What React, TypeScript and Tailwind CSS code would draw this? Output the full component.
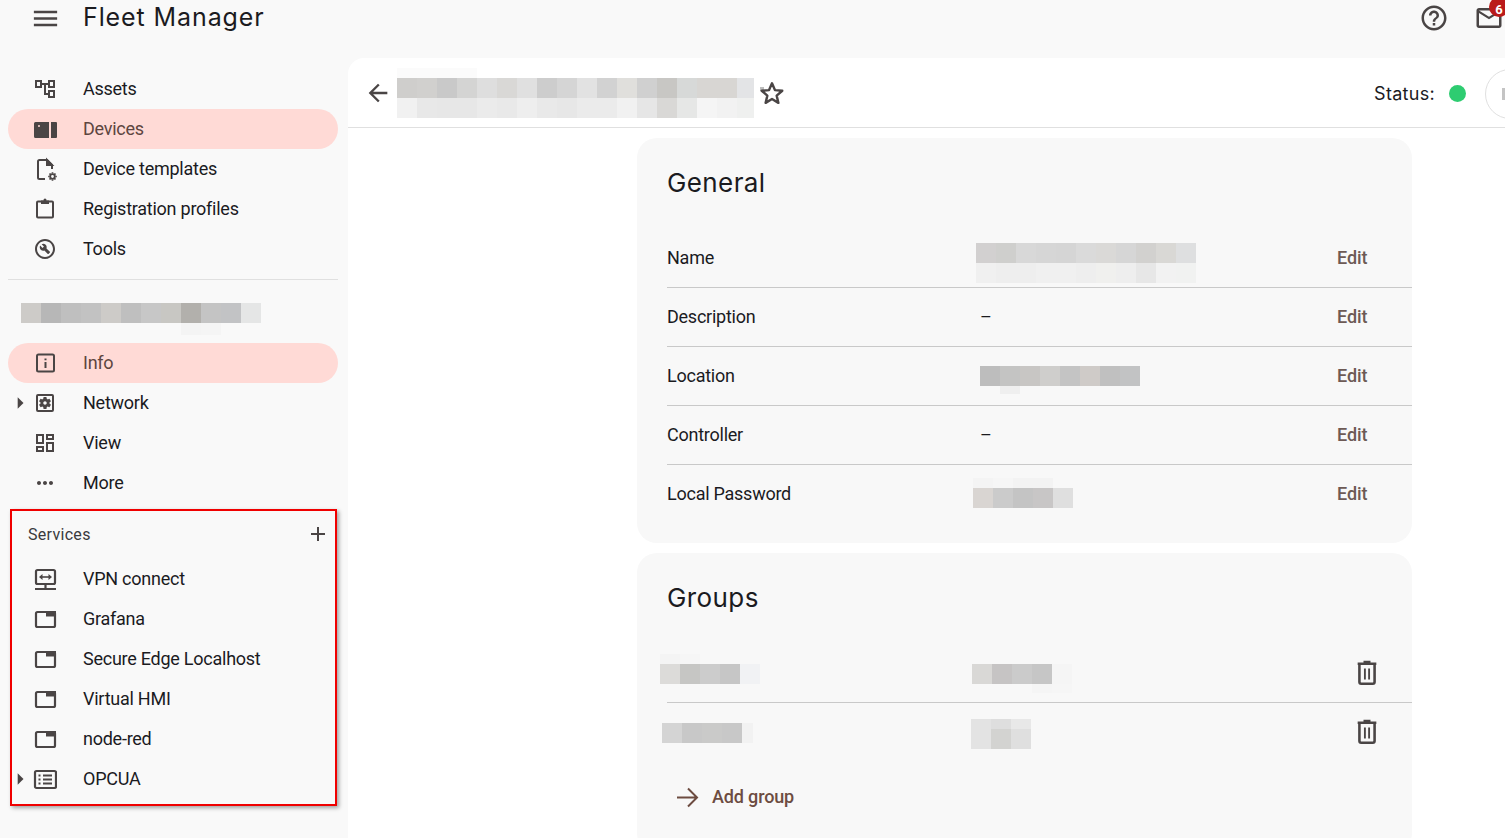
import React from 'react';
import {
  MdAdd,
  MdArrowBack,
  MdArrowRight,
  MdHelpOutline,
  MdMenu,
  MdMoreHoriz,
  MdOutlineAccountTree,
  MdOutlineBuildCircle,
  MdOutlineDashboard,
  MdOutlineMail,
  MdOutlineSettingsApplications,
} from 'react-icons/md';

const ICON = '#4a4545';
const HEADING = "font-['Inter',sans-serif]";
const NONE = 'transparent';

// pixelated (blurred out) values from the original screenshot
function Mosaic({ rows, width, className = '' }: { rows: { h: number; cells: string[] }[]; width: number; className?: string }) {
  return (
    <div className={`shrink-0 overflow-hidden ${className}`} style={{ width }}>
      {rows.map((row, i) => (
        <div key={i} className="flex" style={{ height: row.h }}>
          {row.cells.map((c, j) => (
            <div key={j} className="w-5 shrink-0" style={{ backgroundColor: c }} />
          ))}
        </div>
      ))}
    </div>
  );
}

const DevicesIcon = () => (
  <svg width="24" height="24" viewBox="0 0 24 24" fill={ICON}>
    <path d="M2.500 5H16v16H2.500A1.500 1.500 0 0 1 1 19.500v-13A1.500 1.500 0 0 1 2.500 5zM6 8a1 1 0 1 0 0 2 1 1 0 0 0 0-2z" fillRule="evenodd" />
    <path d="M18 5h5a1 1 0 0 1 1 1v14a1 1 0 0 1-1 1h-5z" />
  </svg>
);

const TemplateIcon = () => (
  <svg width="24" height="24" viewBox="0 0 24 24" fill="none" stroke={ICON} strokeWidth="2">
    <path d="M12 22H6.500A1.500 1.500 0 0 1 5 20.500v-16A1.500 1.500 0 0 1 6.500 3H14l5 5v4" />
    <path d="M14 3v5h5z" fill={ICON} />
    <circle cx="19.500" cy="19.500" r="2.300" strokeWidth="1.800" />
    <path d="M19.500 15.200v1.400M19.500 22.400v1.400M15.200 19.500h1.400M22.400 19.500h1.400M16.500 16.500l1 1M21.500 21.500l1 1M16.500 22.500l1-1M21.500 17.500l1-1" strokeWidth="1.700" />
  </svg>
);

const ClipboardIcon = () => (
  <svg width="24" height="24" viewBox="0 0 24 24" fill="none" stroke={ICON} strokeWidth="2">
    <rect x="4" y="4.500" width="16" height="16" rx="1" />
    <path d="M8 3.500h8V7H8z" fill={ICON} stroke="none" />
    <circle cx="12" cy="3" r="1.500" fill={ICON} stroke="none" />
  </svg>
);

const InfoSquareIcon = () => (
  <svg width="24" height="24" viewBox="0 0 24 24" fill="none" stroke={ICON} strokeWidth="2">
    <rect x="4" y="3.500" width="17" height="17" rx="1.500" />
    <path d="M12.500 11v6M12.500 7.500v1.800" />
  </svg>
);

const VpnIcon = () => (
  <svg width="24" height="24" viewBox="0 0 24 24" fill="none" stroke={ICON} strokeWidth="2.200">
    <rect x="3" y="3" width="19" height="14" rx="1.500" />
    <path d="M2 22h21M12.500 17v4" />
    <path d="M8 10h9" strokeWidth="1.600" />
    <path d="M9.500 7L6 10l3.500 3zM15.500 7L19 10l-3.500 3z" fill={ICON} stroke="none" />
  </svg>
);

const WindowIcon = () => (
  <svg width="24" height="24" viewBox="0 0 24 24" fill="none" stroke={ICON} strokeWidth="2.200">
    <rect x="3" y="5" width="19" height="15" rx="1.500" />
    <path d="M13 4h10v5.500H13z" fill={ICON} stroke="none" />
  </svg>
);

const ListIcon = () => (
  <svg width="24" height="24" viewBox="0 0 24 24" fill="none" stroke={ICON} strokeWidth="2.200">
    <rect x="2" y="4" width="21" height="17" rx="1.500" />
    <path d="M10 8.500h9M10 12.500h9M10 16.500h9" strokeWidth="1.800" />
    <path d="M5.500 8.500h2M5.500 12.500h2M5.500 16.500h2" strokeWidth="1.800" />
  </svg>
);

const TrashIcon = () => (
  <svg width="28" height="28" viewBox="0 0 24 24" fill="none" stroke={ICON} strokeWidth="2.200">
    <path d="M5.500 6v14.500a1.500 1.500 0 0 0 1.500 1.500h10a1.500 1.500 0 0 0 1.500-1.500V6" />
    <path d="M4 5h16M9 3.500h6" />
    <path d="M10.200 9v9.500M13.800 9v9.500" strokeWidth="1.600" />
  </svg>
);

const StarIcon = () => (
  <svg className="relative" width="26" height="26" viewBox="0 0 24 24" fill="none" stroke={ICON} strokeWidth="2.200" strokeLinejoin="round">
    <path d="M12 3l2.700 6.300 6.800.6-5.200 4.500 1.600 6.700-5.900-3.600-5.900 3.600 1.600-6.700-5.200-4.500 6.800-.6z" />
  </svg>
);

const ForwardIcon = () => (
  <svg width="24" height="24" viewBox="0 0 24 24" fill="none" stroke="#6d4c41" strokeWidth="2">
    <path d="M2 12.500h20M13 3.500l9 9-9 9" />
  </svg>
);

const md = (Icon: React.ComponentType<{ size?: number; color?: string }>, size = 24) => <Icon size={size} color={ICON} />;

function NavItem({ icon, label, active, caret }: { icon: React.ReactNode; label: string; active?: boolean; caret?: boolean }) {
  return (
    <div className={`relative flex h-10 items-center rounded-full pl-[25px] text-[18px] tracking-[-0.25px] ${active ? 'bg-[#ffdad6] text-[#5d4540]' : 'text-[#1b1b1f]'}`}>
      {caret && (
        <span className="absolute -left-[2px] top-[6px]">
          <MdArrowRight size={28} color={ICON} />
        </span>
      )}
      <span className="flex w-6 justify-center">{icon}</span>
      <span className="mb-[2px] ml-[26px]">{label}</span>
    </div>
  );
}

function InfoRow({ label, value, last }: { label: string; value: React.ReactNode; last?: boolean }) {
  return (
    <div className={`flex h-[59px] items-center pb-[2px] ${last ? '' : 'border-b border-[#c9c9c9]'}`}>
      <span className="w-[309px] text-[18px] tracking-[-0.25px] text-[#1b1b1f]">{label}</span>
      <div className="w-[361px]">{value}</div>
      <span className="text-[18px] font-medium tracking-[-0.1px] text-[#6d5a55]">Edit</span>
    </div>
  );
}

const Dash = () => <span className="ml-[4px] block text-[18px] text-[#1b1b1f]">–</span>;

export default function App() {
  return (
    <div className="flex h-[838px] w-[1505px] flex-col overflow-hidden bg-[#f9f9f9] font-['Roboto',sans-serif]">
      {/* top bar */}
      <header className="flex h-[58px] shrink-0 items-start">
        <div className="flex h-9 items-center pl-[30px]">
          <MdMenu size={31} color={ICON} />
          <span className={`ml-[22px] text-[25px] tracking-[0.9px] text-[#1b1b1f] ${HEADING}`}>Fleet Manager</span>
        </div>
        <div className="ml-auto flex h-9 items-center pr-[2px]">
          <MdHelpOutline size={30} color={ICON} />
          <div className="relative ml-[25px] h-[30px] w-[29px]">
            <MdOutlineMail size={30} color={ICON} />
            <span className="absolute left-[15px] -top-[6px] flex h-5 w-5 items-center justify-center rounded-full bg-[#ba1a1a] pt-[5px] text-[13px] font-bold leading-none text-white">6</span>
          </div>
        </div>
      </header>

      <div className="flex min-h-0 flex-1">
        {/* sidebar */}
        <aside className="w-[348px] shrink-0 pl-2 pr-[10px] pt-[11px]">
          <NavItem icon={md(MdOutlineAccountTree, 26)} label="Assets" />
          <NavItem icon={<DevicesIcon />} label="Devices" active />
          <NavItem icon={<TemplateIcon />} label="Device templates" />
          <NavItem icon={<ClipboardIcon />} label="Registration profiles" />
          <NavItem icon={md(MdOutlineBuildCircle, 26)} label="Tools" />
          <div className="mt-[10px] border-t border-[#e0e0e0]" />
          <Mosaic
            width={240}
            className="ml-[13px] mt-[23px]"
            rows={[
              { h: 20, cells: ['#cdcbc8', '#b7b7b7', '#bfbfbf', '#c2c2c2', '#cdcbc8', '#bfbfbf', '#c7c7c7', '#c8c7c3', '#b2b0ac', '#c4c4c4', '#c2c3c5', '#e5e6e6'] },
              { h: 12, cells: [NONE, NONE, NONE, NONE, NONE, NONE, NONE, NONE, '#f4f4f4', '#f5f5f5'] },
            ]}
          />
          <div className="mt-2">
            <NavItem icon={<InfoSquareIcon />} label="Info" active />
            <NavItem icon={md(MdOutlineSettingsApplications, 26)} label="Network" caret />
            <NavItem icon={md(MdOutlineDashboard, 26)} label="View" />
            <NavItem icon={md(MdMoreHoriz)} label="More" />
          </div>
          {/* highlighted by the screenshot's author */}
          <section className="ml-[2px] mt-[6px] w-[327px] border-2 border-[#f00000] pb-[5px] shadow-[2px_2px_4px_rgba(0,0,0,0.35)]">
            <div className="flex h-[48px] items-center justify-between pl-4 pr-[5px]">
              <span className="text-[16px] tracking-[0.3px] text-[#3a3a3d]">Services</span>
              <span className="mb-[3px]">
                <MdAdd size={24} color={ICON} />
              </span>
            </div>
            <div className="-ml-[4px]">
              <NavItem icon={<VpnIcon />} label="VPN connect" />
              <NavItem icon={<WindowIcon />} label="Grafana" />
              <NavItem icon={<WindowIcon />} label="Secure Edge Localhost" />
              <NavItem icon={<WindowIcon />} label="Virtual HMI" />
              <NavItem icon={<WindowIcon />} label="node-red" />
              <NavItem icon={<ListIcon />} label="OPCUA" caret />
            </div>
          </section>
        </aside>

        {/* main panel */}
        <main className="min-w-0 flex-1 rounded-tl-2xl bg-white">
          <div className="flex h-[70px] items-center border-b border-[#e0e0e0] pl-[16px]">
            <MdArrowBack size={28} color={ICON} />
            <Mosaic
              width={357}
              className="ml-[5px]"
              rows={[
                { h: 10, cells: ['#fbfbfb', '#fbfbfb', '#fbfbfb', '#fbfbfb', NONE, NONE, NONE, NONE, NONE, NONE, NONE, NONE, NONE, NONE, NONE, NONE, NONE, NONE] },
                { h: 20, cells: ['#cfcecc', '#d1d0ce', '#c9c9c9', '#d4d4d3', '#dedede', '#d9d8d6', '#e0e0e0', '#cdcdcd', '#d5d5d5', '#e2e2e2', '#d2d2d2', '#e0dfdc', '#d0d0d0', '#c8c7c4', '#d7d9d8', '#d8d6d3', '#d8d6d3', '#e3e4e6'] },
                { h: 20, cells: ['#f1f1f1', '#e8e8e8', '#e7e7e7', '#e7e7e7', '#ebebeb', '#e9e9e9', '#eeeeee', '#e9e9e9', '#e7e7e7', '#ebebeb', '#ebebeb', '#f1f1f1', '#e6e6e6', '#d9d8d6', '#e6e7e6', '#f5f5f5', '#f2f2f2', '#eff0ef'] },
              ]}
            />
            <span className="relative ml-[5px] h-[26px]">
              <span className="absolute left-[1px] top-[7px] h-1 w-1 bg-[#bdbdbd]" />
              <StarIcon />
            </span>
            <span className={`ml-auto mt-[2px] text-[18px] tracking-[0.3px] text-[#1b1b1f] ${HEADING}`}>Status:</span>
            <span className="ml-[14px] mt-[2px] h-[17px] w-[17px] shrink-0 rounded-full bg-[#2ecc71]" />
            <span className="-mr-[30px] ml-[19px] mt-[2px] flex h-[50px] w-[50px] shrink-0 items-center rounded-full border border-[#e0e0e0] pl-4">
              <span className="h-3 w-[3px] bg-[#c4c4c4]" />
            </span>
          </div>

          <div className="ml-[289px] w-[775px] pt-[10px]">
            <section className="h-[405px] rounded-[20px] bg-[#f8f8f8] pl-[30px]">
              <h2 className={`pt-[27px] text-[26px] leading-9 tracking-[0.4px] text-[#1b1b1f] ${HEADING}`}>General</h2>
              <div className="mt-[28px]">
                <InfoRow
                  label="Name"
                  value={
                    <Mosaic
                      width={220}
                      className="mt-[12px]"
                      rows={[
                        { h: 20, cells: ['#d2d0d0', '#cfcfcd', '#d8d8d8', '#d6d6d6', '#d5d5d5', '#dadada', '#dad9d7', '#d6d6d6', '#d2d1cf', '#d9d8d5', '#dedfe0'] },
                        { h: 20, cells: ['#f0f0f0', '#eeeeee', '#eeeeee', '#f0f0f0', '#f0f0f0', '#eeeeee', '#f0f0ee', '#eeeeee', '#e7e7e7', '#f2f2f2', '#f1f2f1'] },
                      ]}
                    />
                  }
                />
                <InfoRow label="Description" value={<Dash />} />
                <InfoRow
                  label="Location"
                  value={
                    <Mosaic
                      width={160}
                      className="ml-1 mt-[9px]"
                      rows={[
                        { h: 20, cells: ['#bdbdbd', '#c4c4c3', '#c8c6c4', '#cfcecc', '#c4c4c4', '#cfcbc8', '#c0c0c0', '#c2c3c4'] },
                        { h: 8, cells: [NONE, '#efefef'] },
                      ]}
                    />
                  }
                />
                <InfoRow label="Controller" value={<Dash />} />
                <InfoRow
                  label="Local Password"
                  last
                  value={
                    <Mosaic
                      width={100}
                      className="-ml-[3px] mb-[1px]"
                      rows={[
                        { h: 10, cells: ['#f4f4f4', '#f6f6f6', '#f3f3f3', '#f3f3f3'] },
                        { h: 20, cells: ['#d9d5d2', '#cbcbcb', '#c4c4c4', '#c8c6c6', '#dfdfdf'] },
                      ]}
                    />
                  }
                />
              </div>
            </section>

            <section className="mt-[10px] h-[300px] rounded-[20px] bg-[#f8f8f8] pl-[30px]">
              <h2 className={`pt-[27px] text-[26px] leading-9 tracking-[0.4px] text-[#1b1b1f] ${HEADING}`}>Groups</h2>
              <div className="mt-[27px] flex h-[60px] items-center border-b border-[#c9c9c9]">
                <Mosaic
                  width={100}
                  className="-ml-[7px] mb-[7px]"
                  rows={[
                    { h: 10, cells: ['#f4f4f4', '#f6f6f6'] },
                    { h: 20, cells: ['#dcdbd9', '#c6c6c4', '#cccccc', '#c6c6c6', '#f1f2f4'] },
                  ]}
                />
                <Mosaic
                  width={100}
                  className="ml-[212px] mt-[12px]"
                  rows={[
                    { h: 20, cells: ['#d9d8d6', '#c6c4c4', '#cbcbcb', '#c6c6c6', '#f5f5f5'] },
                    { h: 9, cells: [NONE, NONE, NONE, '#f5f5f5', '#f6f6f6'] },
                  ]}
                />
                <span className="mb-[2px] ml-[281px]">
                  <TrashIcon />
                </span>
              </div>
              <div className="flex h-[59px] items-center">
                <Mosaic width={91} className="-ml-[5px]" rows={[{ h: 20, cells: ['#d4d4d4', '#c8c8c8', '#cacac9', '#c8c8c8', '#f2f2f2'] }]} />
                <Mosaic
                  width={60}
                  className="ml-[218px] mt-[3px]"
                  rows={[
                    { h: 10, cells: ['#e3e3e3', '#dedede', '#e8e8e8'] },
                    { h: 20, cells: ['#e3e3e3', '#d3d3d1', '#dfdfdf'] },
                  ]}
                />
                <span className="mb-[4px] ml-[322px]">
                  <TrashIcon />
                </span>
              </div>
              <div className="ml-[8px] mt-[15px] flex h-10 items-center text-[18px] font-medium tracking-[-0.15px] text-[#6d4c41]">
                <ForwardIcon />
                <span className="mb-[1px] ml-[13px]">Add group</span>
              </div>
            </section>
          </div>
        </main>
      </div>
    </div>
  );
}
